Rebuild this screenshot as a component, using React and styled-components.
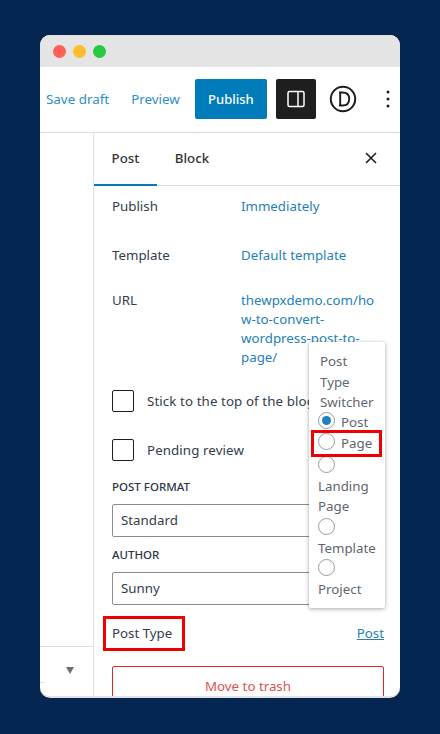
import React from 'react';
import styled, { createGlobalStyle } from 'styled-components';

const Global = createGlobalStyle`
  html, body {
    margin: 0;
    padding: 0;
    background: #042650;
    font-family: "Noto Sans", "Open Sans", sans-serif;
  }
  * { box-sizing: border-box; }
`;

const Page = styled.div`
  width: 440px;
  height: 734px;
  padding: 35px 40px 36px;
  overflow: hidden;
`;

const Window = styled.div`
  position: relative;
  width: 360px;
  height: 663px;
  background: #fff;
  border-radius: 10px;
  overflow: hidden;
  display: flex;
  flex-direction: column;
  border-bottom: 2px solid #e4e4e4;
`;

const TitleBar = styled.div`
  height: 32px;
  flex: none;
  background: #e5e5e5;
  display: flex;
  align-items: center;
  gap: 7px;
  padding-left: 13px;
`;

const Dot = styled.span`
  width: 13px;
  height: 13px;
  border-radius: 50%;
  background: ${(p) => p.$color};
`;

const Toolbar = styled.div`
  height: 66px;
  flex: none;
  display: flex;
  align-items: center;
  padding: 0 0 1px 6px;
  border-bottom: 1px solid #e0e0e0;
`;

const ToolLink = styled.span`
  font-size: 13.4px;
  color: #2f8fc4;
  margin-right: ${(p) => p.$gap}px;
  white-space: nowrap;
`;

const PublishButton = styled.div`
  width: 72px;
  height: 40px;
  margin-right: 9px;
  background: #007cba;
  color: #fff;
  border-radius: 2px;
  display: flex;
  align-items: center;
  justify-content: center;
  font-size: 13px;
  font-weight: 500;
`;

const PanelToggle = styled.div`
  width: 40px;
  height: 40px;
  margin-right: 13px;
  background: #1e1e1e;
  border-radius: 2px;
  display: flex;
  align-items: center;
  justify-content: center;
`;

const DiviLogo = styled.div`
  margin-right: 29px;
  display: flex;
`;

const MoreIcon = styled.div`
  display: flex;
`;

const Main = styled.div`
  flex: 1;
  min-height: 0;
  display: flex;
`;

const LeftRail = styled.div`
  width: 54px;
  flex: none;
  border-right: 1px solid #e0e0e0;
  display: flex;
  flex-direction: column;
  padding-top: 513px;
`;

const RailRow = styled.div`
  height: 36px;
  border-top: 1px solid #e0e0e0;
  display: flex;
  align-items: center;
  justify-content: flex-end;
  padding: 12px 19px 0 0;
`;

const Caret = styled.span`
  width: 0;
  height: 0;
  border-left: 4.5px solid transparent;
  border-right: 4.5px solid transparent;
  border-top: 7px solid #6f6f6f;
`;

const RailLine = styled.div`
  width: 5px;
  height: 1px;
  background: #e0e0e0;
`;

const Sidebar = styled.div`
  flex: 1;
  min-width: 0;
  display: flex;
  flex-direction: column;
`;

const Tabs = styled.div`
  height: 53px;
  flex: none;
  display: flex;
  align-items: stretch;
  border-bottom: 1px solid #e0e0e0;
`;

const Tab = styled.div`
  width: ${(p) => p.$width}px;
  display: flex;
  align-items: center;
  justify-content: center;
  padding-bottom: 2px;
  font-size: 13.3px;
  font-weight: 500;
  color: #333;
  margin-bottom: -1px;
  border-bottom: 2px solid ${(p) => (p.$active ? '#007cba' : 'transparent')};
`;

const CloseWrap = styled.div`
  margin-left: auto;
  width: 58px;
  padding-bottom: 2px;
  display: flex;
  align-items: center;
  justify-content: center;
`;

const Content = styled.div`
  padding: 11px 16px 0 18px;
  display: flex;
  flex-direction: column;
  font-size: 13.3px;
  color: #333d4d;
  line-height: 19px;
`;

const Row = styled.div`
  display: grid;
  grid-template-columns: 129px 136px;
  height: ${(p) => p.$height}px;
  white-space: ${(p) => (p.$nowrap ? 'nowrap' : 'normal')};
`;

const BlueLink = styled.span`
  color: #2680b8;
  overflow-wrap: anywhere;
  ${(p) => p.$under && 'text-decoration: underline;'}
`;

const CheckRow = styled.div`
  display: flex;
  align-items: center;
  gap: 13px;
  height: 22px;
  margin-bottom: ${(p) => p.$gap}px;
  white-space: nowrap;
  letter-spacing: 0.1px;
`;

const Box = styled.span`
  width: 22px;
  height: 22px;
  flex: none;
  border: 1px solid #1e1e1e;
  border-radius: 2px;
  background: #fff;
`;

const FieldLabel = styled.div`
  font-size: 11.5px;
  font-weight: 500;
  line-height: 14px;
  margin-top: 1px;
  margin-bottom: 10px;
  color: #2c3646;
`;

const SelectBox = styled.div`
  height: 33px;
  width: 272px;
  border: 1px solid #8d8d8d;
  border-radius: 2px;
  display: flex;
  align-items: center;
  padding-left: 8px;
  margin-bottom: ${(p) => p.$gap}px;
`;

const TypeRow = styled.div`
  display: flex;
  align-items: center;
  justify-content: space-between;
  height: 22px;
  width: 272px;
  margin-bottom: 22px;
`;

const FlaggedLabel = styled.span`
  outline: 3px solid #f00000;
  padding: 5px 10px 5px 6px;
  margin: -5px -10px -5px -6px;
`;

const TrashButton = styled.div`
  width: 272px;
  height: 40px;
  flex: none;
  border: 1px solid #e0262b;
  border-radius: 2px;
  color: #d9534f;
  text-align: center;
  padding-top: 10px;
`;

const Popover = styled.div`
  position: absolute;
  left: 269px;
  top: 307px;
  width: 76px;
  height: 266px;
  background: #fff;
  border-radius: 2px;
  box-shadow: 0 1px 4px rgba(0, 0, 0, 0.35);
  padding: 9px 5px 0 9px;
  font-size: 13.3px;
  line-height: 20.5px;
  color: #5f6670;
`;

const PopTitle = styled.div`
  padding-left: 2px;
  width: min-content;
  margin-bottom: -1px;
`;

const RadioRow = styled.div`
  display: flex;
  flex-wrap: wrap;
  align-items: flex-start;
  column-gap: 6px;
  min-height: 21px;
  margin-top: ${(p) => p.$gap || 0}px;
`;

const FlaggedRow = styled(RadioRow)`
  outline: 3px solid #f00000;
  width: 65px;
  margin-left: -4px;
  padding-left: 4px;
`;

const Radio = styled.span`
  width: 17px;
  height: 17px;
  margin-bottom: 3px;
  flex: none;
  border-radius: 50%;
  border: 1px solid #9a9a9a;
  background: #fff;
  display: flex;
  align-items: center;
  justify-content: center;
  &::after {
    content: '';
    display: ${(p) => (p.$on ? 'block' : 'none')};
    width: 9px;
    height: 9px;
    border-radius: 50%;
    background: #1f7fc0;
  }
`;

const RadioLabel = styled.span`
  flex: ${(p) => (p.$block ? '0 0 100%' : '0 0 auto')};
  line-height: 20.5px;
`;

const App = () => (
  <>
    <Global />
    <Page>
      <Window>
        <TitleBar>
          <Dot $color="#ff5f57" />
          <Dot $color="#febc2e" />
          <Dot $color="#28c840" />
        </TitleBar>
        <Toolbar>
          <ToolLink $gap={22}>Save draft</ToolLink>
          <ToolLink $gap={15}>Preview</ToolLink>
          <PublishButton>Publish</PublishButton>
          <PanelToggle>
            <svg width="18" height="18" viewBox="0 0 18 18" fill="none">
              <rect x="1" y="1.5" width="16" height="15" rx="1.5" stroke="#fff" strokeWidth="1.5" />
              <path d="M11 1.5v15" stroke="#fff" strokeWidth="1.5" />
            </svg>
          </PanelToggle>
          <DiviLogo>
            <svg width="28" height="28" viewBox="0 0 28 28" fill="none">
              <circle cx="14" cy="14" r="12.2" stroke="#1e1e1e" strokeWidth="2" />
              <path d="M10 7.5h3.6c4.2 0 6.6 2.6 6.6 6.5s-2.4 6.5-6.6 6.5H10M11.2 7.5v13" stroke="#1e1e1e" strokeWidth="1.9" />
            </svg>
          </DiviLogo>
          <MoreIcon>
            <svg width="4" height="18" viewBox="0 0 4 18" fill="#1e1e1e">
              <circle cx="2" cy="2" r="1.5" />
              <circle cx="2" cy="9" r="1.5" />
              <circle cx="2" cy="16" r="1.5" />
            </svg>
          </MoreIcon>
        </Toolbar>
        <Main>
          <LeftRail>
            <RailRow>
              <Caret />
            </RailRow>
            <RailLine />
          </LeftRail>
          <Sidebar>
            <Tabs>
              <Tab $width={63} $active>Post</Tab>
              <Tab $width={70}>Block</Tab>
              <CloseWrap>
                <svg width="12" height="12" viewBox="0 0 12 12" fill="none">
                  <path d="M1 1l10 10M11 1L1 11" stroke="#1e1e1e" strokeWidth="1.6" />
                </svg>
              </CloseWrap>
            </Tabs>
            <Content>
              <Row $height={49} $nowrap>
                <span>Publish</span>
                <BlueLink>Immediately</BlueLink>
              </Row>
              <Row $height={45} $nowrap>
                <span>Template</span>
                <BlueLink>Default template</BlueLink>
              </Row>
              <Row $height={99}>
                <span>URL</span>
                <BlueLink>thewpxdemo.com/how-to-convert-wordpress-post-to-page/</BlueLink>
              </Row>
              <CheckRow $gap={27}>
                <Box />
                <span>Stick to the top of the blog</span>
              </CheckRow>
              <CheckRow $gap={18}>
                <Box />
                <span>Pending review</span>
              </CheckRow>
              <FieldLabel>POST FORMAT</FieldLabel>
              <SelectBox $gap={10}>Standard</SelectBox>
              <FieldLabel>AUTHOR</FieldLabel>
              <SelectBox $gap={17}>Sunny</SelectBox>
              <TypeRow>
                <FlaggedLabel>Post Type</FlaggedLabel>
                <BlueLink $under>Post</BlueLink>
              </TypeRow>
              <TrashButton>Move to trash</TrashButton>
            </Content>
          </Sidebar>
        </Main>
        <Popover>
          <PopTitle>Post Type Switcher</PopTitle>
          <RadioRow>
            <Radio $on />
            <RadioLabel>Post</RadioLabel>
          </RadioRow>
          <FlaggedRow>
            <Radio />
            <RadioLabel>Page</RadioLabel>
          </FlaggedRow>
          <RadioRow $gap={2}>
            <Radio />
            <RadioLabel $block>Landing Page</RadioLabel>
          </RadioRow>
          <RadioRow $gap={1}>
            <Radio />
            <RadioLabel $block>Template</RadioLabel>
          </RadioRow>
          <RadioRow $gap={1}>
            <Radio />
            <RadioLabel $block>Project</RadioLabel>
          </RadioRow>
        </Popover>
      </Window>
    </Page>
  </>
);

export default App;
